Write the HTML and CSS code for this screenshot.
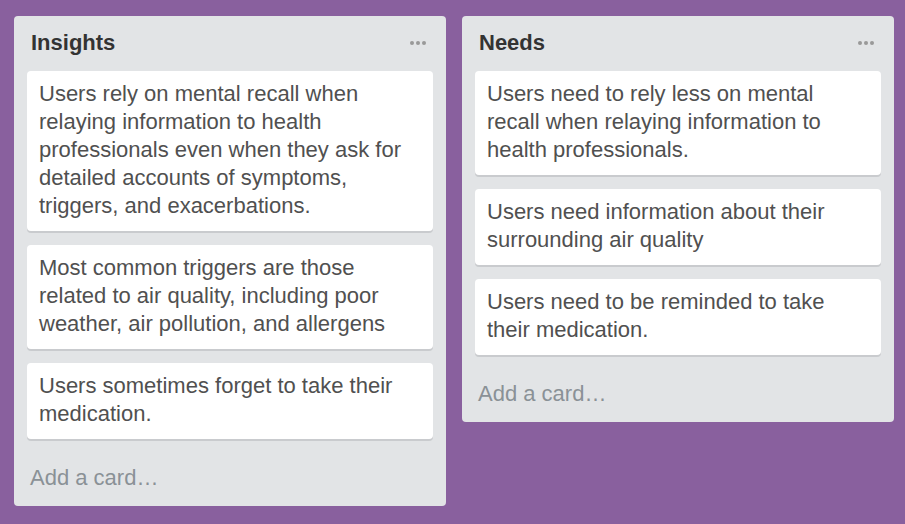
FILE: index.html
```html
<!DOCTYPE html>
<html lang="en">
<head>
<meta charset="utf-8">
<title>Board</title>
<link rel="stylesheet" href="styles.css">
</head>
<body>
<div class="board">
  <section class="list">
    <header class="list-header">
      <h2 class="list-title">Insights</h2>
      <span class="list-menu"><i></i><i></i><i></i></span>
    </header>
    <div class="cards">
      <div class="card">Users rely on mental recall when relaying information to health professionals even when they ask for detailed accounts of symptoms, triggers, and exacerbations.</div>
      <div class="card">Most common triggers are those related to air quality, including poor weather, air pollution, and allergens</div>
      <div class="card">Users sometimes forget to take their medication.</div>
    </div>
    <div class="add-card">Add a card…</div>
  </section>
  <section class="list">
    <header class="list-header">
      <h2 class="list-title">Needs</h2>
      <span class="list-menu"><i></i><i></i><i></i></span>
    </header>
    <div class="cards">
      <div class="card">Users need to rely less on mental recall when relaying information to health professionals.</div>
      <div class="card">Users need information about their surrounding air quality</div>
      <div class="card">Users need to be reminded to take their medication.</div>
    </div>
    <div class="add-card">Add a card…</div>
  </section>
</div>
</body>
</html>
```

FILE: styles.css
```css
html, body {
  margin: 0;
  padding: 0;
  background: #89609e;
  font-family: "Liberation Sans", Arial, Helvetica, sans-serif;
}

.board {
  display: flex;
  align-items: flex-start;
  gap: 16px;
  padding: 16px 0 0 14px;
}

.list {
  width: 432px;
  box-sizing: border-box;
  background: #e2e4e6;
  border-radius: 4px;
  padding: 0 13px;
}

.list-header {
  display: flex;
  align-items: center;
  justify-content: space-between;
  padding: 15px 7px 16px 4px;
}

.list-title {
  margin: 0;
  font-size: 22px;
  line-height: 24px;
  font-weight: bold;
  color: #333333;
}

.list-menu {
  display: flex;
  gap: 2px;
}

.list-menu i {
  width: 4px;
  height: 4px;
  border-radius: 50%;
  background: #999999;
}

.cards {
  display: flex;
  flex-direction: column;
  gap: 14px;
}

.card {
  background: #ffffff;
  border-radius: 4px;
  box-shadow: 0 2px 0 #c9cbce;
  padding: 9px 12px 11px 12px;
  font-size: 22px;
  line-height: 28px;
  color: #505050;
}

.add-card {
  padding: 25px 3px 14px 3px;
  font-size: 22px;
  line-height: 28px;
  color: #8a9196;
}
```
